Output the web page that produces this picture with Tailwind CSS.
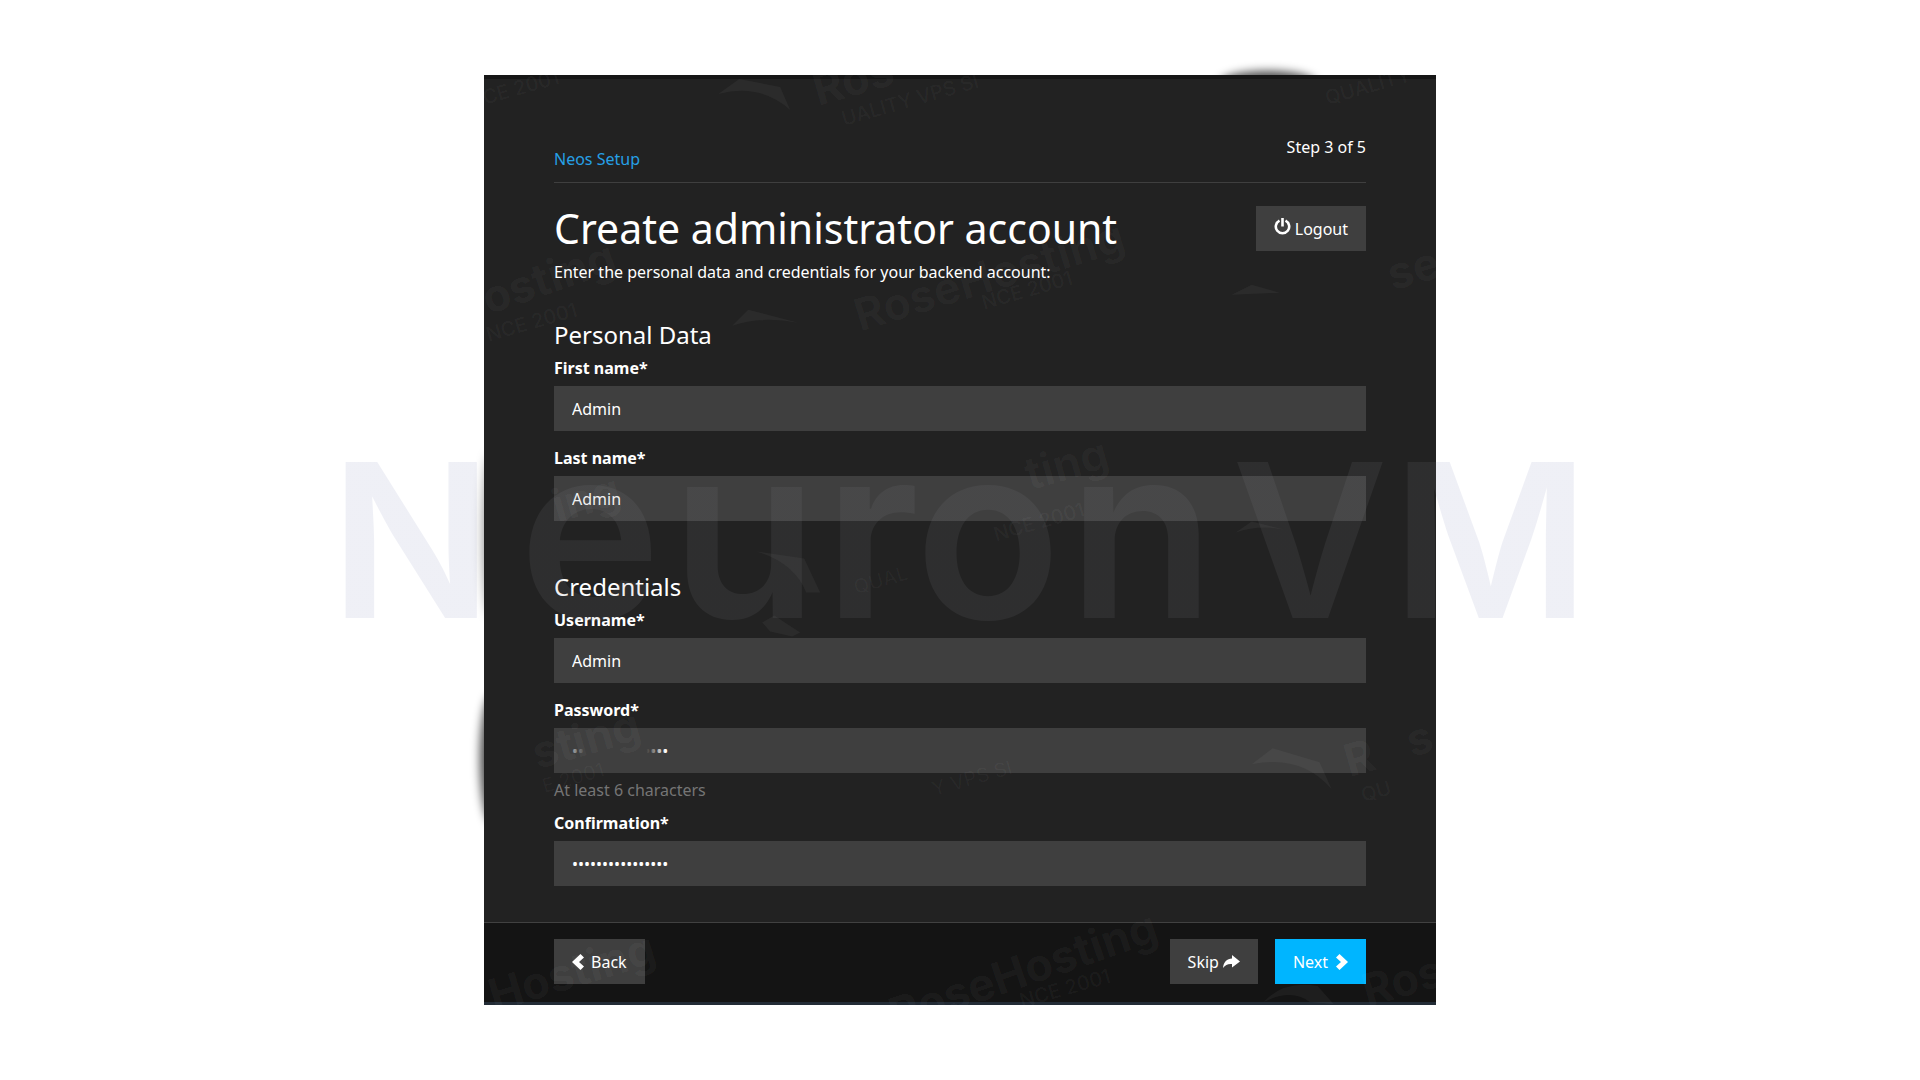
<!DOCTYPE html>
<html lang="en">
<head>
<meta charset="utf-8">
<meta name="viewport" content="width=device-width, initial-scale=1">
<title>Neos Setup</title>
<script src="https://cdn.jsdelivr.net/npm/@tailwindcss/browser@4"></script>
</head>
<body class="min-h-screen bg-white px-4 py-[75px] font-['Noto_Sans',sans-serif] text-base leading-6 text-white">
<div class="relative isolate mx-auto w-full max-w-[952px]">
  <!-- soft shadows behind the panel -->
  <div class="absolute -top-1 left-[736px] -z-10 h-6 w-24 rounded-[50%] bg-black/70 blur-[5px]"></div>
  <div class="absolute top-[620px] -left-1 -z-10 h-32 w-6 rounded-[50%] bg-black/70 blur-[5px]"></div>
  <div class="absolute top-[380px] left-0 -z-10 h-40 w-4 rounded-[50%] bg-black/50 blur-[6px]"></div>

  <form class="border-t-4 border-[#161616] bg-[#222222]">
    <div class="px-[70px] pt-14 pb-9">
      <header class="flex items-start justify-between border-b border-[#3f3f3f] pb-[11px]">
        <a href="#" class="mt-3 text-[#26a0e6]">Neos Setup</a>
        <span>Step 3 of 5</span>
      </header>

      <div class="mt-[23px] flex items-start justify-between">
        <h1 class="text-[41px] leading-11">Create administrator account</h1>
        <button type="button" class="flex h-[45px] items-center gap-1 bg-[#3f3f3f] px-[18px]">
          <svg class="-mt-1 size-[17px]" viewBox="0 0 17 17" fill="none" stroke="currentColor" stroke-width="2.6"><path d="M5.500 2.600a6.700 6.700 0 1 0 6 0M8.500 0v8.500"/></svg>
          Logout
        </button>
      </div>
      <p class="mt-[9px]">Enter the personal data and credentials for your backend account:</p>

      <h2 class="mt-[35px] text-2xl leading-8">Personal Data</h2>
      <label for="first" class="mt-[5px] block font-bold">First name*</label>
      <input id="first" type="text" value="Admin" class="mt-[6px] block h-[45px] w-full bg-[#3f3f3f] px-[18px]">
      <label for="last" class="mt-[15px] block font-bold">Last name*</label>
      <input id="last" type="text" value="Admin" class="mt-[6px] block h-[45px] w-full bg-[#3f3f3f] px-[18px]">

      <h2 class="mt-[50px] text-2xl leading-8">Credentials</h2>
      <label for="user" class="mt-[5px] block font-bold">Username*</label>
      <input id="user" type="text" value="Admin" class="mt-[6px] block h-[45px] w-full bg-[#3f3f3f] px-[18px]">
      <label for="pass" class="mt-[15px] block font-bold">Password*</label>
      <div class="relative mt-[6px]">
        <input id="pass" type="password" value="administrator123" class="block h-[45px] w-full bg-[#3f3f3f] px-[18px]">
        <div class="pointer-events-none absolute inset-y-2 left-4 w-[98px] bg-[linear-gradient(90deg,#3f3f3f66_0%,#3f3f3f_16%,#3f3f3f_78%,transparent_98%)]"></div>
      </div>
      <p class="mt-[5px] text-[#757575]">At least 6 characters</p>
      <label for="confirm" class="mt-[9px] block font-bold">Confirmation*</label>
      <input id="confirm" type="password" value="administrator123" class="mt-[6px] block h-[45px] w-full bg-[#3f3f3f] px-[18px]">
    </div>

    <footer class="flex justify-between border-t border-b-3 border-t-[#414141] border-b-[#232c36] bg-[#141414] px-[70px] pt-4 pb-[18px]">
      <button type="button" class="flex h-[45px] items-center gap-[7px] bg-[#3f3f3f] px-[18px]">
        <svg class="h-4 w-3" viewBox="0 0 12 16" fill="currentColor"><path d="M8.500 0 12 3.500 7 8l5 4.500L8.500 16 0 8z"/></svg>
        Back
      </button>
      <div class="flex gap-[17px]">
        <button type="button" class="flex h-[45px] items-center gap-1 bg-[#3f3f3f] px-[18px]">
          Skip
          <svg class="h-[14px] w-[17px]" viewBox="0 0 17 14" fill="currentColor"><path d="M9 0l8 6.500L9 12.500V9C5 8.500 2.500 10 0 13 .5 7 4 3.800 9 3.500z"/></svg>
        </button>
        <button type="submit" class="flex h-[45px] items-center gap-2 bg-[#00b5ff] px-[18px]">
          Next
          <svg class="h-4 w-3" viewBox="0 0 12 16" fill="currentColor"><path d="M3.500 0 0 3.500 5 8 0 12.500 3.500 16 12 8z"/></svg>
        </button>
      </div>
    </footer>
  </form>

  <!-- faint hosting watermark scattered over the panel -->
  <svg class="pointer-events-none absolute inset-0 size-full font-['Inter',sans-serif]" viewBox="0 0 952 931" fill="#fff" fill-opacity="0.045" aria-hidden="true">
    <g font-size="45" font-weight="700">
      <text transform="translate(334 31) rotate(-16)">Ros</text>
      <text transform="translate(4 240) rotate(-19)">osting</text>
      <text transform="translate(376 257) rotate(-17)" fill-opacity="0.03">RoseHosting</text>
      <text transform="translate(909 216) rotate(-16)">se</text>
      <text transform="translate(73 448) rotate(-16)">ing</text>
      <text transform="translate(546 416) rotate(-16)" fill-opacity="0.03">ting</text>
      <text transform="translate(53 695) rotate(-16)">sting</text>
      <text transform="translate(866 703) rotate(-16)">R</text>
      <text transform="translate(928 683) rotate(-16)">s</text>
      <text transform="translate(10 938) rotate(-17)">Hosting</text>
      <text transform="translate(412 957) rotate(-19)">RoseHosting</text>
      <text transform="translate(884 933) rotate(-16)">Ros</text>
    </g>
    <g font-size="20" font-weight="500">
      <text transform="translate(-14 34) rotate(-16)">NCE 2001</text>
      <text transform="translate(360 51) rotate(-16)">UALITY VPS SI</text>
      <text transform="translate(844 30) rotate(-16)">QUALITY</text>
      <text transform="translate(4 267) rotate(-16)">NCE 2001</text>
      <text transform="translate(500 235) rotate(-16)">NCE 2001</text>
      <text transform="translate(512 467) rotate(-16)">NCE 2001</text>
      <text transform="translate(372 520) rotate(-16)" fill-opacity="0.03">QUAL</text>
      <text transform="translate(60 719) rotate(-16)" fill-opacity="0.03">E 2001</text>
      <text transform="translate(450 722) rotate(-16)" fill-opacity="0.03">Y VPS SI</text>
      <text transform="translate(880 728) rotate(-16)">QU</text>
      <text transform="translate(538 934) rotate(-16)">NCE 2001</text>
    </g>
    <path d="M234 19 255 4 296 12 306 35Q276 8 234 19ZM248 251 264 235 314 248Q276 241 248 251ZM768 690 789 674 836 688 848 715Q818 680 768 690ZM780 928Q800 906 834 912L850 930 826 928Q808 914 780 928ZM272 477 320 484 336 518 322 518Q310 488 272 477ZM278 548 290 541 316 558 308 562 286 557ZM752 458 768 447 800 455Q776 450 752 458ZM748 220 768 210 796 218Z"/>
  </svg>

  <!-- brand watermark across the page: bluish on white, neutral over the panel -->
  <svg class="pointer-events-none absolute top-[363px] -left-[164px] h-[200px] w-[1280px] overflow-visible font-['Inter',sans-serif]" viewBox="0 0 1280 200" fill="url(#brand)" fill-opacity="0.12" font-weight="600" aria-hidden="true">
    <linearGradient id="brand" gradientUnits="userSpaceOnUse" x1="0" y1="0" x2="1280" y2="0">
      <stop offset="0.128" stop-color="#7a82b4"/>
      <stop offset="0.128" stop-color="#85868c"/>
      <stop offset="0.872" stop-color="#85868c"/>
      <stop offset="0.872" stop-color="#7a82b4"/>
    </linearGradient>
    <text y="180"><tspan font-size="214" x="10">N</tspan><tspan font-size="240" x="199 351 504 595 748">euron</tspan><tspan font-size="214" x="912 1072">VM</tspan></text>
  </svg>
</div>
</body>
</html>
